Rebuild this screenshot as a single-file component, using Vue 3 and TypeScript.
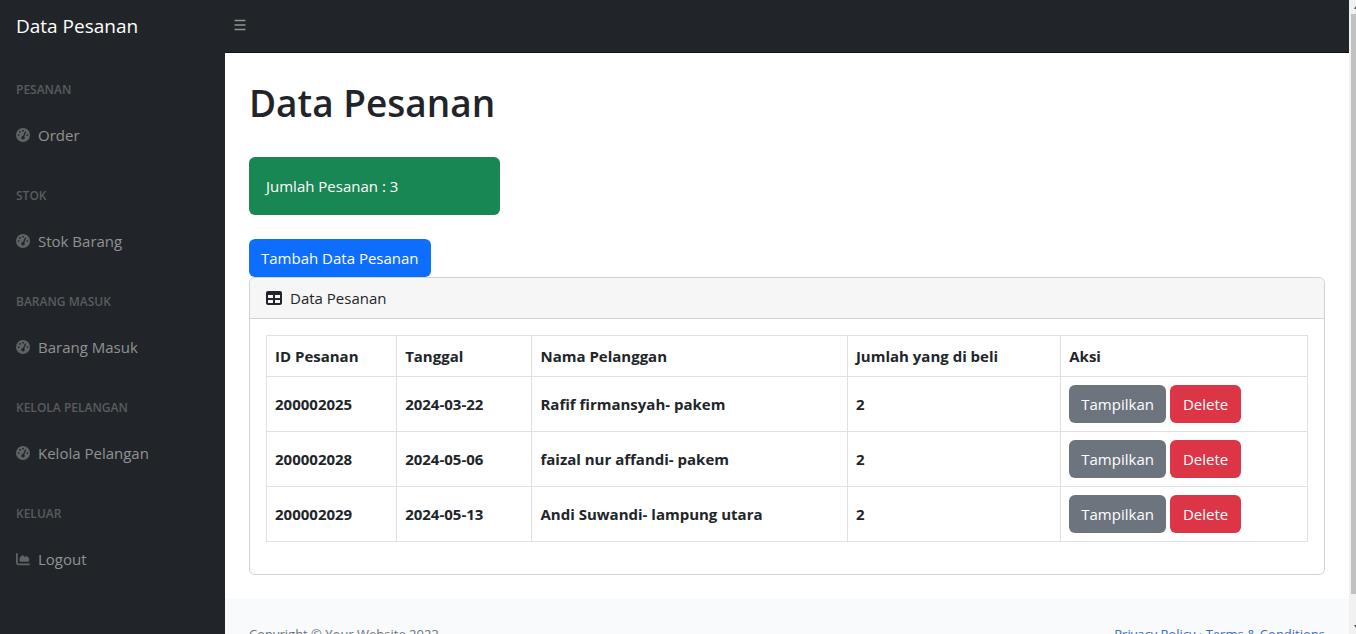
<script setup lang="ts">
interface MenuGroup {
  heading: string
  label: string
  icon: 'gauge' | 'chart'
}

interface Order {
  id: string
  date: string
  customer: string
  amount: number
}

const icons = {
  gauge:
    'M0 256a256 256 0 1 1 512 0A256 256 0 1 1 0 256zM288 96a32 32 0 1 0 -64 0 32 32 0 1 0 64 0zM256 416c35.3 0 64-28.7 64-64c0-17.4-6.9-33.1-18.1-44.6L366 161.7c5.3-12.1-.2-26.3-12.3-31.6s-26.3 .2-31.6 12.3L257.9 288c-.6 0-1.3 0-1.9 0c-35.3 0-64 28.7-64 64s28.7 64 64 64zM176 144a32 32 0 1 0 -64 0 32 32 0 1 0 64 0zM96 288a32 32 0 1 0 0-64 32 32 0 1 0 0 64zm352-32a32 32 0 1 0 -64 0 32 32 0 1 0 64 0z',
  chart:
    'M64 64c0-17.7-14.3-32-32-32S0 46.3 0 64V400c0 44.2 35.8 80 80 80H480c17.7 0 32-14.3 32-32s-14.3-32-32-32H80c-8.8 0-16-7.2-16-16V64zm96 288H448c17.7 0 32-14.3 32-32V251.8c0-7.6-2.7-15-7.7-20.8l-65.8-76.8c-12.1-14.2-33.7-15-46.9-1.8l-21 21c-10 10-26.4 9.2-35.4-1.6l-39.2-47c-12.6-15.1-35.7-15.4-48.7-.6L135.9 215c-5.1 5.8-7.9 13.3-7.9 21.1v84c0 17.7 14.3 32 32 32z',
}

const menu: MenuGroup[] = [
  { heading: 'PESANAN', label: 'Order', icon: 'gauge' },
  { heading: 'STOK', label: 'Stok Barang', icon: 'gauge' },
  { heading: 'BARANG MASUK', label: 'Barang Masuk', icon: 'gauge' },
  { heading: 'KELOLA PELANGAN', label: 'Kelola Pelangan', icon: 'gauge' },
  { heading: 'KELUAR', label: 'Logout', icon: 'chart' },
]

const orders: Order[] = [
  { id: '200002025', date: '2024-03-22', customer: 'Rafif firmansyah- pakem', amount: 2 },
  { id: '200002028', date: '2024-05-06', customer: 'faizal nur affandi- pakem', amount: 2 },
  { id: '200002029', date: '2024-05-13', customer: 'Andi Suwandi- lampung utara', amount: 2 },
]
</script>

<template>
  <div class="app">
    <aside class="sidebar">
      <a class="brand" href="#">Data Pesanan</a>
      <nav>
        <div v-for="group in menu" :key="group.heading">
          <div class="menu-heading">{{ group.heading }}</div>
          <a class="menu-link" href="#">
            <svg class="menu-icon" viewBox="0 0 512 512" aria-hidden="true">
              <path :d="icons[group.icon]" />
            </svg>
            {{ group.label }}
          </a>
        </div>
      </nav>
    </aside>

    <div class="page">
      <header class="topbar">
        <button class="toggle" type="button" aria-label="Menu">
          <svg viewBox="0 0 14 14" aria-hidden="true">
            <path d="M1.5 2.5h11M1.5 7h11M1.5 11.5h11" />
          </svg>
        </button>
      </header>

      <main class="content">
        <h1>Data Pesanan</h1>
        <div class="summary">Jumlah Pesanan : {{ orders.length }}</div>
        <button class="btn primary" type="button">Tambah Data Pesanan</button>

        <section class="card">
          <div class="card-header">
            <svg class="table-icon" viewBox="0 0 512 512" aria-hidden="true">
              <path
                d="M64 256V160H224v96H64zm0 64H224v96H64V320zm224 96V320H448v96H288zM448 256H288V160H448v96zM64 32C28.7 32 0 60.7 0 96V416c0 35.3 28.7 64 64 64H448c35.3 0 64-28.7 64-64V96c0-35.3-28.7-64-64-64H64z"
              />
            </svg>
            Data Pesanan
          </div>
          <div class="card-body">
            <table>
              <thead>
                <tr>
                  <th class="col-id">ID Pesanan</th>
                  <th class="col-date">Tanggal</th>
                  <th class="col-name">Nama Pelanggan</th>
                  <th class="col-amount">Jumlah yang di beli</th>
                  <th>Aksi</th>
                </tr>
              </thead>
              <tbody>
                <tr v-for="order in orders" :key="order.id">
                  <th>{{ order.id }}</th>
                  <th>{{ order.date }}</th>
                  <th>{{ order.customer }}</th>
                  <th>{{ order.amount }}</th>
                  <td>
                    <div class="actions">
                      <button class="btn secondary" type="button">Tampilkan</button>
                      <button class="btn danger" type="button">Delete</button>
                    </div>
                  </td>
                </tr>
              </tbody>
            </table>
          </div>
        </section>
      </main>

      <footer class="footer">
        <span>Copyright © Your Website 2023</span>
        <span>
          <a href="#">Privacy Policy</a>
          ·
          <a href="#">Terms &amp; Conditions</a>
        </span>
      </footer>
    </div>

    <div class="scrollbar" aria-hidden="true">
      <svg viewBox="0 0 7 12"><path d="M5 8l2-3v3z" /></svg>
      <div class="thumb"></div>
      <svg class="down" viewBox="0 0 7 12"><path d="M5 4l2 3v-3z" /></svg>
    </div>
  </div>
</template>

<style>
body {
  margin: 0;
  overflow: hidden;
}
</style>

<style scoped>
* {
  box-sizing: border-box;
}

.app {
  display: flex;
  height: 100vh;
  overflow: hidden;
  background: #fff;
  color: #212529;
  font: 15px/24px 'Open Sans', 'Noto Sans', sans-serif;
}

.sidebar {
  flex: 0 0 225px;
  background: #212529;
}

.brand {
  display: flex;
  align-items: center;
  height: 53px;
  padding: 0 16px 2px;
  color: #fff;
  font-size: 19px;
  text-decoration: none;
}

.menu-heading {
  padding: 28px 16px 12px;
  color: #585c5f;
  font-size: 12px;
  font-weight: 600;
  line-height: 18px;
}

.menu-link {
  display: flex;
  align-items: center;
  gap: 8px;
  height: 48px;
  padding: 0 16px;
  color: #909294;
  text-decoration: none;
}

.menu-icon {
  width: 14px;
  height: 14px;
  fill: #5f6366;
}

.page {
  flex: 1;
  min-width: 0;
}

.topbar {
  display: flex;
  align-items: center;
  height: 53px;
  padding: 0 8px 2px;
  background: #212529;
  border-bottom: 1px solid #101216;
}

.toggle {
  padding: 0;
  border: 0;
  background: none;
}

.toggle svg {
  display: block;
  width: 14px;
  height: 14px;
  fill: none;
  stroke: #909294;
  stroke-width: 1.5;
}

.content {
  padding: 24px;
}

h1 {
  margin: 0;
  padding: 2px 0 30px;
  font-size: 37px;
  font-weight: 600;
  line-height: 48px;
}

.summary {
  width: calc((100% + 24px) / 4 - 24px);
  margin-bottom: 24px;
  padding: 17px;
  border-radius: 6px;
  background: #198754;
  color: #fff;
}

.btn {
  display: block;
  padding: 7px 12px;
  border: 0;
  border-radius: 6px;
  color: #fff;
  font: inherit;
}

.primary {
  background: #0d6efd;
}

.secondary {
  background: #6c757d;
}

.danger {
  padding: 7px 13px;
  background: #dc3545;
}

.card {
  border: 1px solid #d3d3d4;
  border-radius: 6px;
}

.card-header {
  display: flex;
  align-items: center;
  gap: 8px;
  padding: 8px 16px;
  border-bottom: 1px solid #d3d3d4;
  border-radius: 5px 5px 0 0;
  background: #f6f6f6;
}

.table-icon {
  width: 16px;
  height: 16px;
  fill: #212529;
}

.card-body {
  padding: 16px 16px 32px;
}

table {
  width: 100%;
  border-collapse: collapse;
  table-layout: fixed;
}

th,
td {
  padding: 8px;
  border: 1px solid #dee2e6;
  text-align: left;
}

.col-id {
  width: 12.5%;
}

.col-date {
  width: 13%;
}

.col-name {
  width: 30.3%;
}

.col-amount {
  width: 20.5%;
}

.actions {
  display: flex;
  gap: 4px;
}

.footer {
  display: flex;
  justify-content: space-between;
  padding: 24px;
  background: #f8fafb;
  color: #6c757d;
  font-size: 13px;
  line-height: 22px;
}

.footer a {
  color: #3a6fc0;
}

.scrollbar {
  display: flex;
  flex: 0 0 7px;
  flex-direction: column;
  background: #f1f1f1;
}

.scrollbar svg {
  flex: 0 0 14px;
  width: 7px;
  fill: #505050;
}

.thumb {
  flex: 0 1 580px;
  margin-left: 2px;
  background: #c1c1c1;
}

.scrollbar .down {
  margin-top: auto;
}
</style>
